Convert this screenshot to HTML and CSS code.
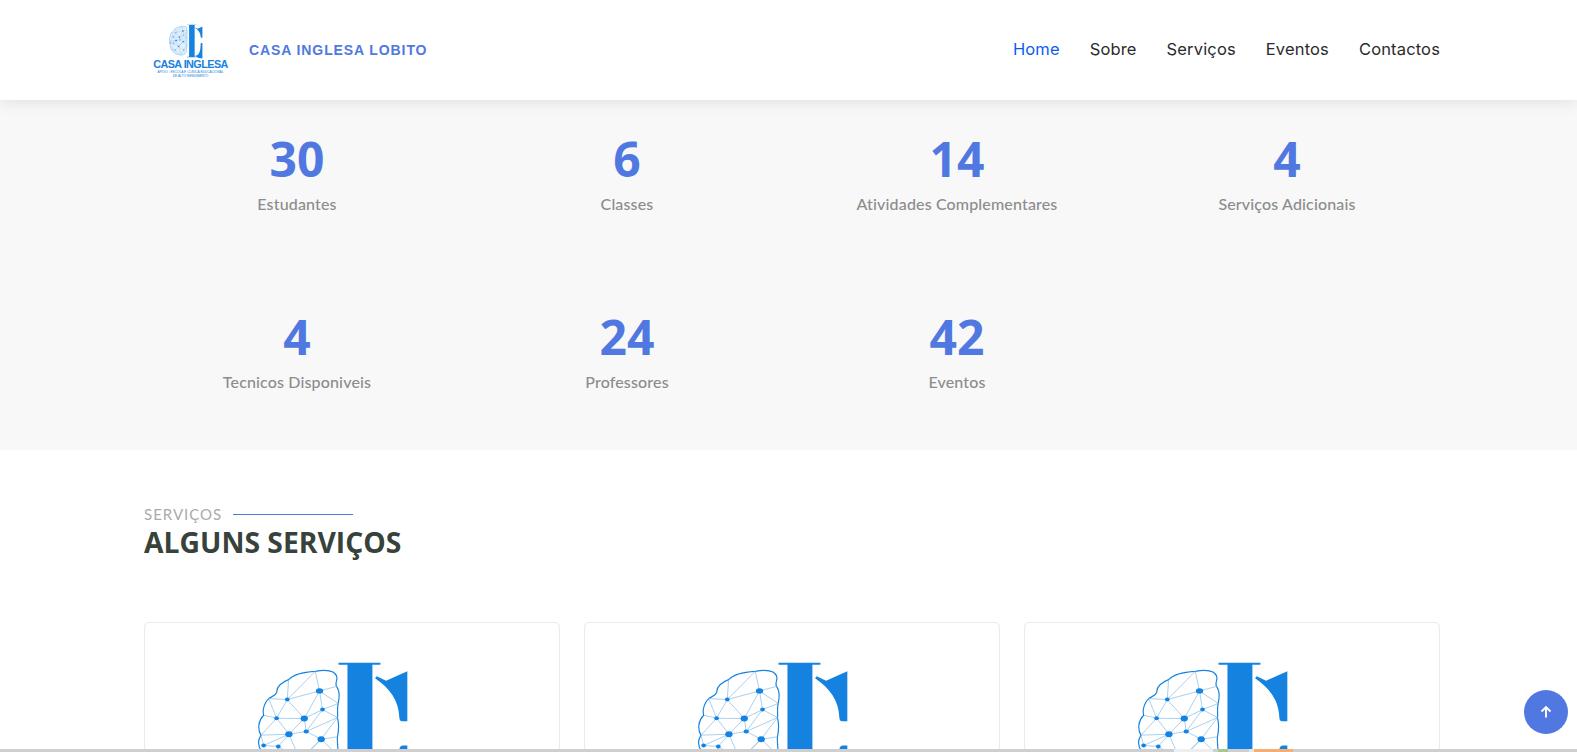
FILE: index.html
```html
<!DOCTYPE html>
<html lang="pt">
	<head>
		<meta charset="UTF-8">
		<title>Casa Inglesa Lobito</title>
		<link rel="stylesheet" href="styles.css">
	</head>
	<body>
		<svg class="defs" width="0" height="0">
			<symbol id="mark" viewBox="170 120 460 470">
				<!-- letra -->
				<path class="ink" d="M415 127H541V133H517V560H541V568H415V560H442V133H415Z"/>
				<path class="ink" d="M622 153V303H606Q598 303 598 292C596 240 570 205 525 174L530 168L558 181Z"/>
				<path class="ink" d="M622 376V585C590 582 560 575 525 550L530 543C570 550 598 500 598 390Q598 376 610 376Z"/>
				<!-- cerebro -->
				<path class="edge" d="M345 153C375 148 405 150 410 170C412 180 404 188 409 198C420 212 418 232 414 250C410 268 414 280 412 292C418 315 416 330 412 350C410 370 416 385 412 405C414 430 412 450 404 470C410 495 395 520 370 528C350 545 320 545 300 530C280 535 255 525 245 505C225 505 205 480 205 460C190 450 180 420 188 400C172 380 172 360 182 345C170 325 175 300 190 285C185 265 195 245 205 235C215 228 225 228 230 215C228 200 245 185 265 178C280 162 310 155 345 153Z"/>
				<path class="web" d="M345 153L358 212L261 238L265 178M345 153L261 238L229 294L190 285M261 238L312 295L229 294L205 235L261 238M358 212L312 295L367 268L358 212L410 198M358 212L414 250L367 268L412 292L318 334L312 295L266 342L229 294L182 345L266 342L190 376M367 268L318 334L363 357L412 292M318 334L266 342L234 379L190 376L182 345M266 342L300 420L363 357L412 350M234 379L300 420L250 470L205 460L234 379M363 357L300 420L370 470L412 405L363 357M300 420L330 530M250 470L300 530M370 470L330 530"/>
				<g class="ink">
					<ellipse cx="358" cy="212" rx="11" ry="8"/>
					<ellipse cx="261" cy="238" rx="7" ry="6"/>
					<ellipse cx="367" cy="268" rx="7" ry="6"/>
					<ellipse cx="229" cy="294" rx="7" ry="6"/>
					<ellipse cx="312" cy="295" rx="11" ry="9"/>
					<ellipse cx="318" cy="334" rx="8" ry="6"/>
					<ellipse cx="266" cy="342" rx="11" ry="9"/>
					<ellipse cx="363" cy="357" rx="11" ry="9"/>
					<ellipse cx="190" cy="376" rx="7" ry="6"/>
					<ellipse cx="234" cy="379" rx="7" ry="6"/>
					<ellipse cx="300" cy="420" rx="10" ry="8"/>
					<ellipse cx="250" cy="470" rx="8" ry="7"/>
					<ellipse cx="370" cy="470" rx="9" ry="7"/>
				</g>
			</symbol>
		</svg>

		<header class="topbar">
			<div class="wrap topbar-in">
				<a class="brand" href="#">
					<span class="logo">
						<svg class="logo-mark"><use href="#mark"/></svg>
						<span class="logo-name">CASA INGLESA</span>
						<span class="logo-sub">APOIO - ESCOLA E CLÍNICA EDUCACIONAL<br>DE ALTO RENDIMENTO</span>
					</span>
					<span class="brand-text">CASA INGLESA LOBITO</span>
				</a>
				<nav class="menu">
					<a class="active" href="#">Home</a>
					<a href="#">Sobre</a>
					<a href="#">Serviços</a>
					<a href="#">Eventos</a>
					<a href="#">Contactos</a>
				</nav>
			</div>
		</header>

		<section class="counts">
			<div class="counts-grid">
				<div class="count"><span class="num">30</span><p>Estudantes</p></div>
				<div class="count"><span class="num">6</span><p>Classes</p></div>
				<div class="count"><span class="num">14</span><p>Atividades Complementares</p></div>
				<div class="count"><span class="num">4</span><p>Serviços Adicionais</p></div>
				<div class="count"><span class="num">4</span><p>Tecnicos Disponiveis</p></div>
				<div class="count"><span class="num">24</span><p>Professores</p></div>
				<div class="count"><span class="num">42</span><p>Eventos</p></div>
			</div>
		</section>

		<section class="wrap services">
			<div class="eyebrow">SERVIÇOS<span class="rule"></span></div>
			<h2>ALGUNS SERVIÇOS</h2>
			<div class="cards">
				<div class="card"><svg class="card-mark"><use href="#mark"/></svg></div>
				<div class="card"><svg class="card-mark"><use href="#mark"/></svg></div>
				<div class="card"><svg class="card-mark"><use href="#mark"/></svg></div>
			</div>
		</section>

		<a class="to-top" href="#">
			<svg width="16" height="16" viewBox="0 0 16 16"><path d="M8 13.500V3M3.500 7.500L8 3l4.500 4.500"/></svg>
		</a>

		<div class="strip">
			<span class="seg-a"></span>
			<span class="seg-light"></span>
			<span class="seg-b"></span>
			<span class="seg-green"></span>
			<span class="seg-c"></span>
			<span class="seg-pale"></span>
			<span class="seg-orange"></span>
		</div>
	</body>
</html>
```

FILE: styles.css
```css
html, body{
	margin: 0;
	height: 100%;
	overflow: hidden;
}
body{
	background: #fff;
	font-family: "Open Sans", sans-serif;
	color: #37423b;
}
a{
	text-decoration: none;
}
.defs{
	display: block;
	height: 0;
}
.ink{
	fill: #1682e0;
}
.edge{
	fill: var(--brain, #fff);
	stroke: #1682e0;
	stroke-width: var(--edge, 3.5);
}
.web{
	fill: none;
	stroke: #6fb0e6;
	stroke-width: var(--web, 1.8);
}
.wrap{
	box-sizing: border-box;
	width: 1320px;
	margin-left: 132px;
	padding: 0 12px;
}

/* header */
.topbar{
	position: relative;
	height: 100px;
	background: #fff;
	box-shadow: 0 2px 15px rgba(0,0,0,.1);
}
.topbar-in{
	height: 100%;
	display: flex;
	align-items: center;
	justify-content: space-between;
}
.brand{
	display: flex;
	align-items: center;
	gap: 21px;
	padding-left: 9px;
}
.logo{
	width: 75px;
	display: flex;
	flex-direction: column;
	align-items: center;
	color: #1682e0;
	margin-top: 3px;
}
.logo-mark{
	width: 34px;
	height: 35px;
	margin-left: -10px;
	--brain: #e3f0fb;
	--edge: 4;
	--web: 4;
}
.logo-name{
	font: bold 10.8px/10px "Liberation Sans", sans-serif;
	letter-spacing: -.55px;
	white-space: nowrap;
}
.logo-sub{
	font: 3.2px/3.6px "Liberation Sans", sans-serif;
	text-align: center;
	white-space: nowrap;
	margin-top: 2px;
}
.brand-text{
	font: bold 14px "Liberation Sans", sans-serif;
	letter-spacing: .9px;
	color: #5078e0;
}
.menu{
	display: flex;
	gap: 30px;
	padding-bottom: 2px;
}
.menu a{
	font: 16.5px Inter, sans-serif;
	letter-spacing: .15px;
	color: #2b2b2b;
}
.menu a.active{
	color: #0d5cf2;
}

/* contadores */
.counts{
	height: 350px;
	background: #f8f8f8;
}
.counts-grid{
	width: 1320px;
	margin-left: 132px;
	display: grid;
	grid-template-columns: repeat(4, 1fr);
	grid-auto-rows: 178px;
	padding-top: 29px;
}
.count{
	text-align: center;
}
.num{
	display: block;
	font-size: 48px;
	line-height: 60px;
	font-weight: 700;
	color: #5078e0;
}
.count p{
	margin: 5px 0 0;
	font: 500 16px/20px Lato, sans-serif;
	letter-spacing: .15px;
	color: #8c8c8c;
}

/* servicos */
.services{
	padding-top: 55px;
}
.eyebrow{
	display: flex;
	align-items: center;
	gap: 11px;
	font: 15px/18px Lato, sans-serif;
	letter-spacing: 1px;
	color: #aaa;
}
.rule{
	width: 120px;
	height: 1px;
	background: #4f78dc;
}
h2{
	margin: 0;
	font-size: 28.3px;
	line-height: 38px;
	font-weight: 700;
	color: #37423b;
}
.cards{
	display: grid;
	grid-template-columns: repeat(3, 416px);
	gap: 24px;
	margin-top: 61px;
}
.card{
	height: 400px;
	box-sizing: border-box;
	border: 1px solid #ebebeb;
	border-radius: 5px;
	padding: 37px 0 0 112px;
}
.card-mark{
	display: block;
	width: 153px;
	height: 157px;
}

/* por cima */
.to-top{
	position: fixed;
	right: 9px;
	bottom: 18px;
	width: 44px;
	height: 44px;
	border-radius: 50%;
	background: #5078e0;
	display: flex;
	align-items: center;
	justify-content: center;
}
.to-top path{
	fill: none;
	stroke: #fff;
	stroke-width: 1.9;
}
.strip{
	position: fixed;
	left: 0;
	right: 0;
	bottom: 0;
	height: 3px;
	display: flex;
	background: #cfcfcf;
}
.strip span{
	display: block;
	height: 100%;
}
.seg-a{ width: 1174px; }
.seg-light{ width: 39px; background: #eee; }
.seg-b{ width: 5px; }
.seg-green{ width: 10px; background: #a3c98f; }
.seg-c{ width: 21px; }
.seg-pale{ width: 5px; background: #e6e6e6; }
.seg-orange{ width: 39px; background: #f5ad72; }
```
